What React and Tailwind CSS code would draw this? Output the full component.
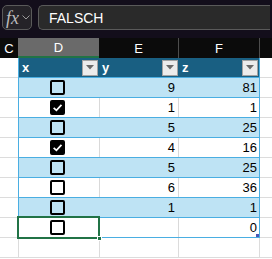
const rows = [
  { x: false, y: 9, z: 81 },
  { x: true, y: 1, z: 1 },
  { x: false, y: 5, z: 25 },
  { x: true, y: 4, z: 16 },
  { x: false, y: 5, z: 25 },
  { x: false, y: 6, z: 36 },
  { x: false, y: 1, z: 1 },
];

function Checkbox({ checked }) {
  return (
    <div
      className={`flex h-[15px] w-[15px] items-center justify-center rounded-[2px] border-2 border-black ${
        checked ? "bg-black" : "bg-transparent"
      }`}
    >
      {checked && (
        <svg width="11" height="11" viewBox="0 0 10 10">
          <path d="M1.5 5.4 L4 7.6 L8.6 2.6" fill="none" stroke="#fff" strokeWidth="1.6" />
        </svg>
      )}
    </div>
  );
}

function Dropdown() {
  return (
    <div className="flex h-[16px] w-[16px] items-center justify-center border border-[#a3a3a3] bg-[#ececec]">
      <svg width="8" height="5" viewBox="0 0 8 5">
        <path d="M0 0 H8 L4 4.5 Z" fill="#6a6a6a" />
      </svg>
    </div>
  );
}

function SideCell({ w }) {
  return <div className={`${w} h-full border-b border-[#dcdcdc]`} />;
}

export default function App() {
  return (
    <div className="h-[259px] w-[272px] overflow-hidden bg-white font-['Liberation_Sans',Arial,sans-serif]">
      {/* formula bar */}
      <div className="flex h-[38px] gap-[6px] bg-[#130e1b] px-[2px] pt-[5px]">
        <div className="flex h-[25px] w-[30px] items-center gap-[3px] rounded-[5px] border border-[#5a5a5a] bg-[#252328] pl-[3px]">
          <span className="font-['Liberation_Serif',serif] text-[18px] leading-none italic text-[#bdbdbd]">fx</span>
          <svg width="8" height="5" viewBox="0 0 8 5">
            <path d="M0.5 0.5 L4 4 L7.5 0.5" fill="none" stroke="#9a9a9a" strokeWidth="1" />
          </svg>
        </div>
        <div className="flex h-[25px] flex-1 items-center rounded-l-[5px] border border-r-0 border-[#5a5a5a] bg-[#2a2a2a] pl-[10px]">
          <span className="text-[14px] leading-none text-white">FALSCH</span>
        </div>
      </div>

      {/* column headers */}
      <div className="flex h-[20px] bg-[#0b0b0b] text-[13px] leading-none text-white">
        <div className="flex w-[18px] items-center justify-center">C</div>
        <div className="flex w-[81px] items-center justify-center border-b-2 border-[#217346] bg-[#6a6a6a]">D</div>
        <div className="flex w-[80px] items-center justify-center border-r border-[#4d4d4d]">E</div>
        <div className="flex w-[81px] items-center justify-center border-r border-[#4d4d4d]">F</div>
        <div className="flex-1" />
      </div>

      {/* table header */}
      <div className="flex h-[20px]">
        <SideCell w="w-[18px]" />
        <div className="flex w-[242px] border-x border-b border-[#4aaee2] bg-[#195f82] text-[13px] font-bold leading-none text-white">
          <div className="flex w-[81px] items-center justify-between pl-[3px] pr-[2px]">
            <span>x</span>
            <Dropdown />
          </div>
          <div className="flex w-[79px] items-center justify-between pl-[2px] pr-[1px]">
            <span>y</span>
            <Dropdown />
          </div>
          <div className="flex w-[80px] items-center justify-between pl-[3px] pr-[1px]">
            <span>z</span>
            <Dropdown />
          </div>
        </div>
        <SideCell w="flex-1" />
      </div>

      {/* data rows */}
      {rows.map((r, i) => {
        const blue = i % 2 === 0;
        const sep = blue ? "border-[#bee3f4]" : "border-[#d9d9d9]";
        return (
          <div key={i} className="flex h-[20px]">
            <SideCell w="w-[18px]" />
            <div
              className={`flex w-[242px] border-x border-b border-[#4aaee2] text-[13px] leading-none text-black ${
                blue ? "bg-[#bee3f4]" : "bg-white"
              }`}
            >
              <div className={`flex w-[81px] items-center justify-center border-r ${sep} pr-[3px]`}>
                <Checkbox checked={r.x} />
              </div>
              <div className={`flex w-[79px] items-center justify-end border-r ${sep} pr-[3px]`}>{r.y}</div>
              <div className="flex w-[80px] items-center justify-end pr-[2px]">{r.z}</div>
            </div>
            <SideCell w="flex-1" />
          </div>
        );
      })}

      {/* last table row with selected cell */}
      <div className="flex h-[20px]">
        <SideCell w="w-[18px]" />
        <div className="flex w-[242px] border-x border-b border-[#4aaee2] bg-white text-[13px] leading-none text-black">
          <div className="relative flex w-[81px] items-center justify-center border-r border-[#d9d9d9] pr-[3px]">
            <Checkbox checked={false} />
            <div className="absolute -top-[2px] -bottom-[2px] -left-[2px] -right-[1px] border-2 border-[#217346]" />
            <div className="absolute -right-[3px] -bottom-[4px] h-[5px] w-[5px] border border-white bg-[#217346]" />
          </div>
          <div className="flex w-[79px] items-center justify-end border-r border-[#d9d9d9] pr-[3px]" />
          <div className="relative flex w-[80px] items-center justify-end pr-[2px]">
            0
            <div className="absolute right-0 bottom-0 h-[3px] w-[3px] bg-[#4b57b5]" />
          </div>
        </div>
        <SideCell w="flex-1" />
      </div>

      {/* empty row */}
      <div className="flex h-[20px]">
        <div className="h-full w-[19px] border-r border-b border-[#dcdcdc]" />
        <div className="h-full w-[81px] border-r border-b border-[#dcdcdc]" />
        <div className="h-full w-[79px] border-r border-b border-[#dcdcdc]" />
        <div className="h-full w-[81px] border-r border-b border-[#dcdcdc]" />
        <div className="h-full flex-1 border-b border-[#dcdcdc]" />
      </div>
    </div>
  );
}
